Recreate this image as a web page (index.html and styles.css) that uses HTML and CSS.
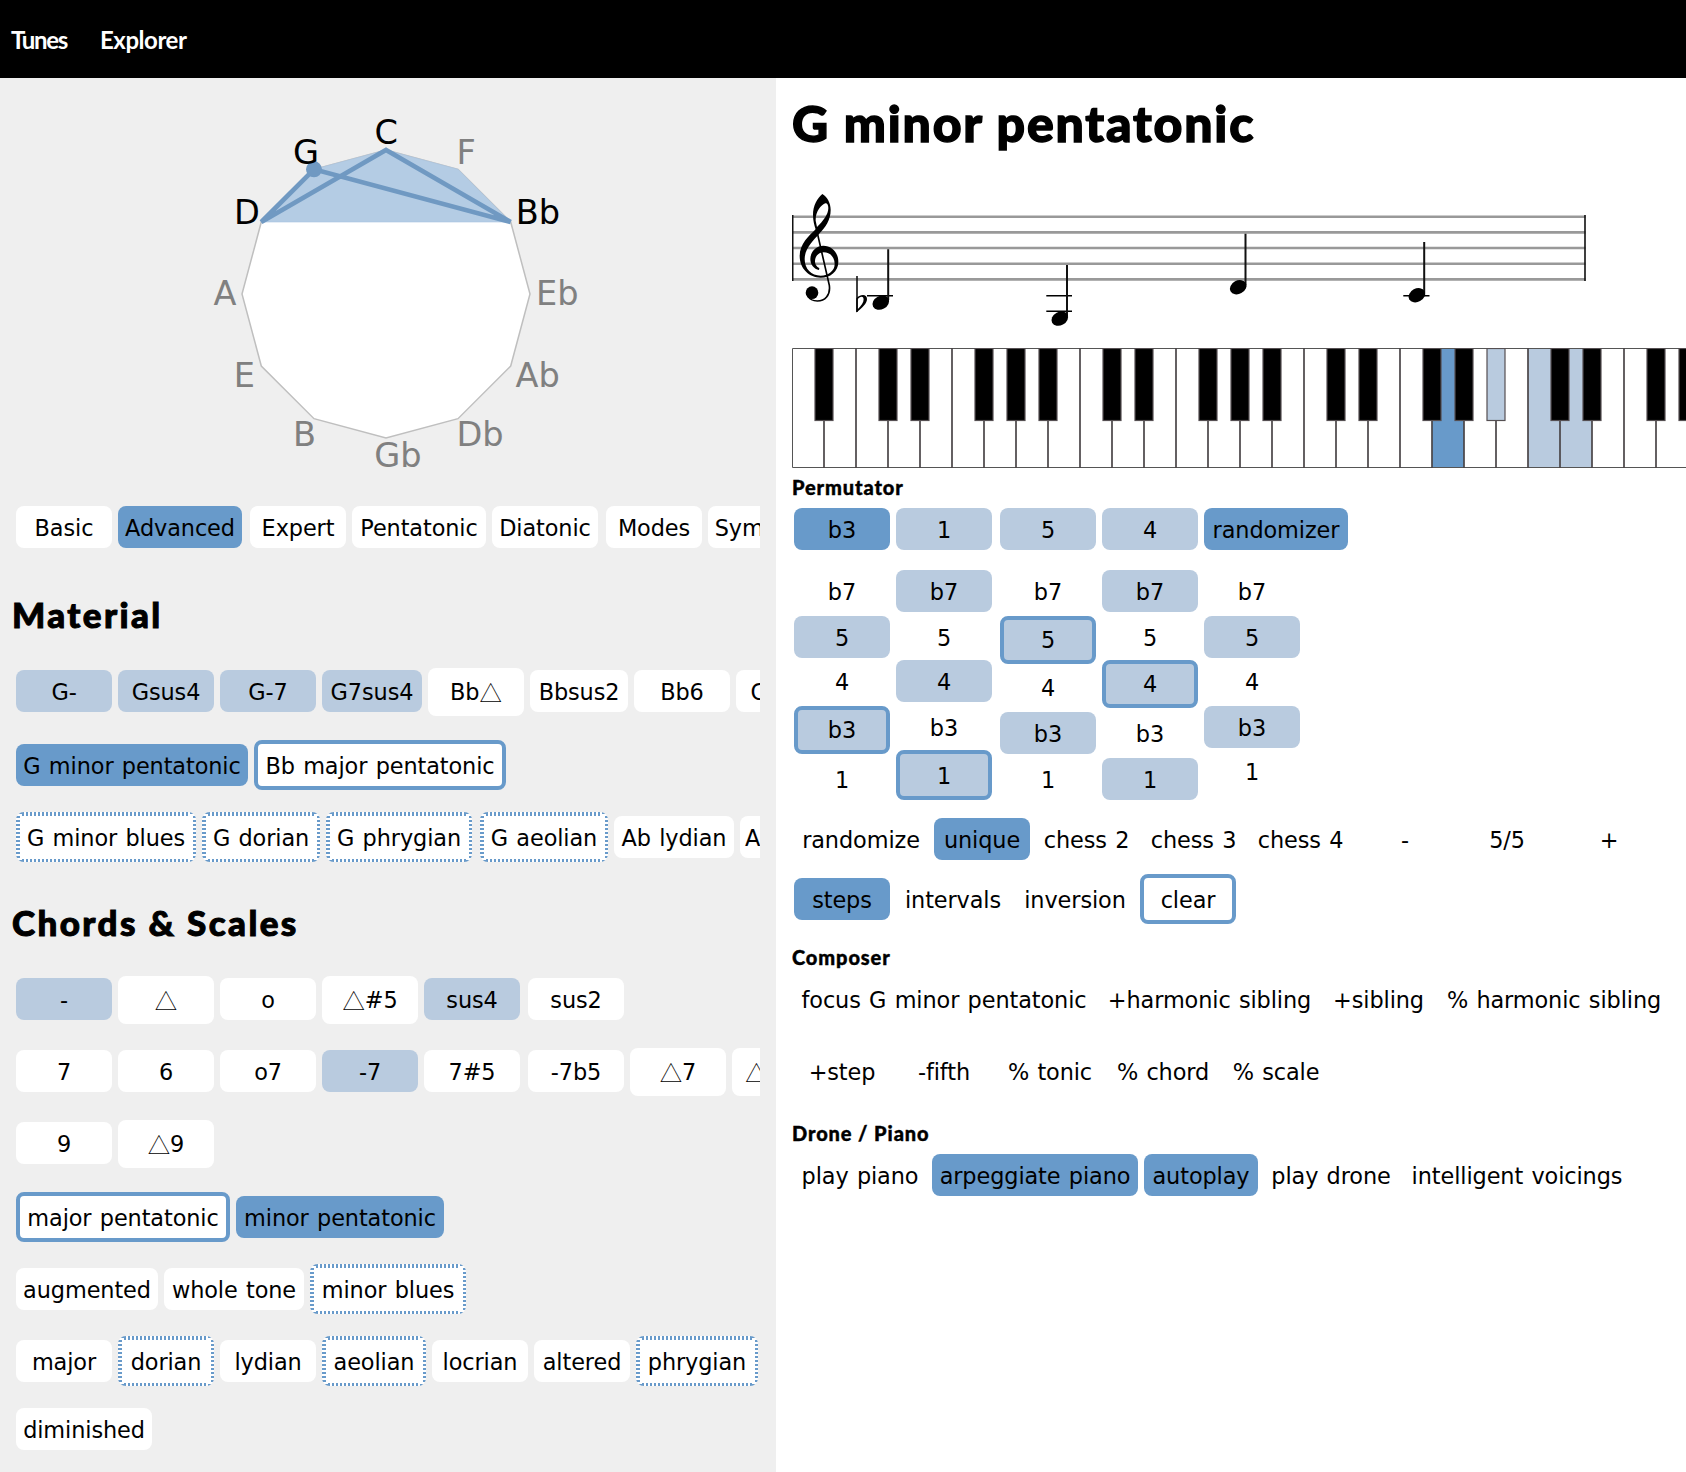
FILE: index.html
```html
<!DOCTYPE html>
<html lang="en">
<head>
<meta charset="utf-8">
<title>Explorer</title>
<link rel="stylesheet" href="styles.css">
</head>
<body>
<nav class="nav"><a class="nav-tunes">Tunes</a><a class="nav-explorer">Explorer</a></nav>
<main class="page">
<section class="left">
  <svg class="circle" viewBox="0 78 776 428">
    <polygon class="ring" points="386,150 458,169.3 510.7,222 530,294 510.7,366 458,418.7 386,438 314,418.7 261.3,366 242,294 261.3,222 314,169.3"/>
    <polygon class="area" points="261.3,222 314,169.3 386,150 458,169.3 510.7,222"/>
    <path class="edges" d="M510.7 222L386 150L261.3 222L314 169.3L510.7 222"/>
    <circle class="root" cx="314" cy="169.3" r="8"/>
    <g class="labels on">
      <text x="374.5" y="143.5">C</text><text x="293" y="163.5">G</text><text x="234" y="224">D</text><text x="515.7" y="224">Bb</text>
    </g>
    <g class="labels">
      <text x="456.5" y="163.5">F</text><text x="536" y="305">Eb</text><text x="515.5" y="386.5">Ab</text><text x="456.5" y="445.5">Db</text><text x="374.3" y="466.7">Gb</text><text x="293" y="445.5">B</text><text x="233.7" y="386.5">E</text><text x="213.5" y="305">A</text>
    </g>
  </svg>
  <div class="row first"><b>Basic</b><b class="solid w124">Advanced</b><b class="push">Expert</b><b class="w134">Pentatonic</b><b class="w106">Diatonic</b><b class="push">Modes</b><b class="w134">Symmetric</b></div>
  <h2 class="h-material"><span>Material</span></h2>
  <div class="row flush"><b class="soft">G-</b><b class="soft">Gsus4</b><b class="soft">G-7</b><b class="soft w100">G7sus4</b><b class="tri">Bb<i>△</i></b><b class="w98">Bbsus2</b><b>Bb6</b><b>Csus4</b></div>
  <div class="row loose"><b class="solid w232">G minor pentatonic</b><b class="line w252">Bb major pentatonic</b></div>
  <div class="row"><b class="dots w180">G minor blues</b><b class="dots w118">G dorian</b><b class="dots w146">G phrygian</b><b class="dots push w128">G aeolian</b><b class="w120">Ab lydian</b><b class="w156">Ab lydian #9</b></div>
  <h2 class="h-chords"><span>Chords &amp; Scales</span></h2>
  <div class="row flush"><b class="soft">-</b><b class="tri"><i>△</i></b><b>o</b><b class="tri"><i>△</i>#5</b><b class="soft">sus4</b><b class="push">sus2</b></div>
  <div class="row"><b>7</b><b>6</b><b>o7</b><b class="soft">-7</b><b>7#5</b><b class="push">-7b5</b><b class="tri"><i>△</i>7</b><b class="tri"><i>△</i>7#5</b></div>
  <div class="row"><b>9</b><b class="tri"><i>△</i>9</b></div>
  <div class="row loose"><b class="line w214">major pentatonic</b><b class="solid w208">minor pentatonic</b></div>
  <div class="row"><b class="w142">augmented</b><b class="w140">whole tone</b><b class="dots w156">minor blues</b></div>
  <div class="row"><b>major</b><b class="dots">dorian</b><b>lydian</b><b class="dots w104">aeolian</b><b>locrian</b><b>altered</b><b class="dots w122">phrygian</b></div>
  <div class="row tight"><b class="w136">diminished</b></div>
</section>
<section class="right">
  <h1><span>G minor pentatonic</span></h1>
  <svg class="staff" viewBox="792 180 894 160">
    <path class="lines" d="M792 216.8H1585.5M792 232.4H1585.5M792 248H1585.5M792 263.7H1585.5M792 279.4H1585.5"/>
    <path class="bars" d="M792.7 215V281M1585 215V281"/>
    <g transform="translate(780 80) scale(.33333)">
      <path fill-rule="evenodd" d="M127 342C112 354 99 378 99 404C99 422 103 436 107 448C88 466 59 492 59 528C59 566 88 593 122 593C150 593 175 576 175 545C175 517 154 497 130 497C108 497 91 516 91 537C91 554 102 567 117 570L118 564C108 560 105 550 105 543C105 529 116 517 131 517C149 517 164 530 164 552C164 572 146 587 122 587C94 587 74 567 74 537C74 507 98 484 119 460C136 441 152 421 152 390C152 370 142 350 127 342ZM136 370C124 374 106 394 107 422L111 441C129 423 145 404 145 384C145 374 141 369 136 370Z"/>
      <path class="clef-stem" d="M109 446L148 616C152 646 134 663 112 663C98 663 88 656 84 648"/>
      <circle cx="96" cy="638" r="19"/>
    </g>
    <path class="flat-stem" d="M857 276V312"/>
    <path d="M856.300 312.500V298.500C859 294.500 867 293 867 299C867 303.500 862.500 307.500 856.300 312.500ZM857.700 309.300C861.500 305.500 863.600 302.500 863.600 299.500C863.600 295.500 859.500 296.500 857.700 299.500Z" fill-rule="evenodd"/>
    <path class="ledger" d="M867 295.800H893M1046.300 295.800H1072M1046.300 311.300H1072M1403.300 295.800H1429.500"/>
    <path class="stems" d="M888.200 249.300V300M1067 265V316M1245.500 233.700V285M1424.200 242V293"/>
    <g class="heads">
      <ellipse rx="8.700" ry="6.700" transform="translate(880.800 302.600) rotate(-28)"/>
      <ellipse rx="8.700" ry="6.700" transform="translate(1059.800 318.600) rotate(-28)"/>
      <ellipse rx="8.700" ry="6.700" transform="translate(1238.200 287.200) rotate(-28)"/>
      <ellipse rx="8.700" ry="6.700" transform="translate(1416.900 295.200) rotate(-28)"/>
    </g>
  </svg>
  <svg class="piano" viewBox="792 348 894 120">
    <rect class="k-on" x="1432" y="348" width="32" height="119"/>
    <rect class="k-soft" x="1528" y="348" width="64" height="119"/>
    <path class="keys" d="M1690 348.500H792.500V467.500H1690"/>
    <path class="seps" d="M824 348V468M856 348V468M888 348V468M920 348V468M952 348V468M984 348V468M1016 348V468M1048 348V468M1080 348V468M1112 348V468M1144 348V468M1176 348V468M1208 348V468M1240 348V468M1272 348V468M1304 348V468M1336 348V468M1368 348V468M1400 348V468M1432 348V468M1464 348V468M1496 348V468M1528 348V468M1560 348V468M1592 348V468M1624 348V468M1656 348V468"/>
    <g class="black">
      <rect x="815" y="348.500" width="18" height="72"/><rect x="879" y="348.500" width="18" height="72"/><rect x="911" y="348.500" width="18" height="72"/><rect x="975" y="348.500" width="18" height="72"/><rect x="1007" y="348.500" width="18" height="72"/><rect x="1039" y="348.500" width="18" height="72"/><rect x="1103" y="348.500" width="18" height="72"/><rect x="1135" y="348.500" width="18" height="72"/><rect x="1199" y="348.500" width="18" height="72"/><rect x="1231" y="348.500" width="18" height="72"/><rect x="1263" y="348.500" width="18" height="72"/><rect x="1327" y="348.500" width="18" height="72"/><rect x="1359" y="348.500" width="18" height="72"/><rect x="1423" y="348.500" width="18" height="72"/><rect x="1455" y="348.500" width="18" height="72"/><rect class="k-soft" x="1487" y="348.500" width="18" height="72"/><rect x="1551" y="348.500" width="18" height="72"/><rect x="1583" y="348.500" width="18" height="72"/><rect x="1647" y="348.500" width="18" height="72"/><rect x="1679" y="348.500" width="18" height="72"/>
    </g>
  </svg>
  <h3 class="h-perm"><span>Permutator</span></h3>
  <div class="row flush"><b class="solid">b3</b><b class="soft">1</b><b class="soft push">5</b><b class="soft">4</b><b class="solid w144">randomizer</b></div>
  <div class="matrix">
    <div class="col"><b>b7</b><b class="soft">5</b><b>4</b><b class="soft line">b3</b><b class="drop">1</b></div>
    <div class="col"><b class="soft">b7</b><b>5</b><b class="soft">4</b><b>b3</b><b class="soft line tall">1</b></div>
    <div class="col push"><b>b7</b><b class="soft line">5</b><b>4</b><b class="soft">b3</b><b class="drop">1</b></div>
    <div class="col"><b class="soft">b7</b><b>5</b><b class="soft line">4</b><b>b3</b><b class="soft drop">1</b></div>
    <div class="col"><b>b7</b><b class="soft">5</b><b>4</b><b class="soft">b3</b><b>1</b></div>
  </div>
  <div class="row modes"><b class="w134">randomize</b><b class="solid">unique</b><b class="w101">chess 2</b><b class="w101">chess 3</b><b class="w101">chess 4</b><b>-</b><b>5/5</b><b>+</b></div>
  <div class="row views"><b class="solid">steps</b><b class="w114">intervals</b><b class="w118">inversion</b><b class="line">clear</b></div>
  <h3 class="h-comp"><span>Composer</span></h3>
  <div class="row flush"><b class="w300">focus G minor pentatonic</b><b class="w219">+harmonic sibling</b><b class="w107">+sibling</b><b class="w232">% harmonic sibling</b></div>
  <div class="row"><b>+step</b><b>-fifth</b><b class="w104">% tonic</b><b class="w110">% chord</b><b class="w104">% scale</b></div>
  <h3 class="h-drone"><span>Drone / Piano</span></h3>
  <div class="row flush"><b class="w132">play piano</b><b class="solid w206">arpeggiate piano</b><b class="solid w114">autoplay</b><b class="w134">play drone</b><b class="w226">intelligent voicings</b></div>
</section>
</main>
</body>
</html>
```
FILE: styles.css
```css
* { box-sizing: border-box; }
body { margin: 0; background: #fff; color: #000; font-family: Verdana, "DejaVu Sans", sans-serif; overflow: hidden; }
svg { display: block; }

.nav { height: 78px; background: #000; color: #fff; display: flex; gap: 33px; padding: 25px 0 0 11px; font: 700 24px/29px Lato, sans-serif; }
.nav-tunes { width: 56px; letter-spacing: -1.3px; }
.nav-explorer { letter-spacing: -0.45px; }

.page { display: flex; height: 1394px; }
.left { width: 776px; flex: none; background: #efefef; padding-right: 16px; }
.right { width: 910px; flex: none; padding-left: 16px; overflow: hidden; }

.circle { width: 776px; height: 428px; }
.ring { fill: #fff; stroke: #bfbfbf; stroke-width: 1.5; }
.area { fill: #b4cce4; stroke: #a9c5e1; stroke-width: 0.6; }
.edges { fill: none; stroke: #7099c2; stroke-width: 4.6; }
.root { fill: #7099c2; }
.labels { font-size: 33.6px; fill: #808080; }
.labels.on { fill: #000; }

.row { display: flex; gap: 6px; height: 42px; margin-top: 30px; padding-left: 16px; align-items: flex-start; overflow-x: clip; }
.right .row { padding-left: 2px; }
.row.first, .row.flush { margin-top: 0; }
.row.loose { margin-top: 32px; }
.row.tight { margin-top: 26px; }
.row.modes { margin-top: 18px; }
.row.views { margin-top: 18px; }

b { flex: none; width: 96px; height: 42px; padding-top: 9px; border-radius: 8px; font-weight: 400; font-size: 22.4px; line-height: 26px; letter-spacing: -0.1px; word-spacing: 1.3px; white-space: pre; display: flex; justify-content: center; }
.left b { background-color: #fff; }
b.solid, .left b.solid { background-color: #689aca; }
b.soft, .left b.soft { background-color: #b9cbdf; }
.push { margin-left: 2px; }
b.line { border: 4px solid #689aca; height: 50px; margin-top: -4px; }
b.dots {
  height: 50px; margin-top: -4px; padding-top: 13px;
  background-image:
    linear-gradient(#fff, #fff),
    repeating-linear-gradient(90deg, #689aca 0 2px, #fff 2px 4px),
    repeating-linear-gradient(0deg, #689aca 0 2px, #fff 2px 4px);
  background-size: calc(100% - 7px) calc(100% - 7px), calc(100% - 12px) 100%, 100% 100%;
  background-position: center;
  background-repeat: no-repeat;
}
b.tri { height: 48px; margin-top: -2px; padding-top: 11px; }
i { font-style: normal; font-family: "Noto Sans CJK JP", sans-serif; font-weight: 300; letter-spacing: 0; }

h1, h2, h3 { margin: 0; font-family: Futura, Lato, sans-serif; font-weight: 900; white-space: nowrap; -webkit-text-stroke: 0.4px #000; }
h1 { height: 102px; padding-top: 15px; font-size: 50px; line-height: 60px; letter-spacing: 1.8px; -webkit-text-stroke-width: 1.4px; }
h2 { font-size: 35px; line-height: 42px; letter-spacing: 2.4px; -webkit-text-stroke-width: 1px; }
.h-material { height: 122px; padding: 45px 0 0 12px; }
.h-chords { height: 120px; padding: 43px 0 0 12px; }
h3 { font-size: 20px; line-height: 24px; letter-spacing: 0.9px; }
.h-perm { height: 40px; padding-top: 7px; }
.h-comp { height: 58px; padding-top: 25px; }
.h-drone { height: 62px; padding-top: 29px; }

.staff { width: 894px; height: 160px; }
.lines { stroke: #999; stroke-width: 2.600; }
.bars { stroke: #111; stroke-width: 1.600; }
.clef-stem { fill: none; stroke: #000; stroke-width: 5; }
.flat-stem { fill: none; stroke: #111; stroke-width: 1.600; }
.ledger { stroke: #000; stroke-width: 1.500; }
.stems { stroke: #111; stroke-width: 2; }

.piano { width: 894px; height: 120px; margin-top: 8px; }
.keys { fill: none; stroke: #555; stroke-width: 1; }
.seps { stroke: #4a4648; stroke-width: 1.700; }
.black rect { fill: #000; stroke: #554f52; stroke-width: 1.200; }
.k-on { fill: #689aca; }
.k-soft, .black rect.k-soft { fill: #b9cbdf; }

.matrix { display: flex; gap: 6px; height: 230px; margin: 20px 0 0 2px; }
.col b:nth-child(odd) { margin-bottom: 4px; }
.col b:nth-child(even) { margin-bottom: 2px; }
.col b.line { height: 48px; margin-top: 0; padding-top: 7px; }
.col b.line.tall { height: 50px; padding-top: 9px; }
.col b.drop { margin-top: 4px; }

.w98 { width: 98px; } .w100 { width: 100px; } .w101 { width: 101px; } .w104 { width: 104px; }
.w106 { width: 106px; } .w107 { width: 107px; } .w110 { width: 110px; } .w114 { width: 114px; }
.w118 { width: 118px; } .w120 { width: 120px; } .w122 { width: 122px; } .w124 { width: 124px; }
.w128 { width: 128px; } .w132 { width: 132px; } .w134 { width: 134px; } .w136 { width: 136px; }
.w140 { width: 140px; } .w142 { width: 142px; } .w144 { width: 144px; } .w146 { width: 146px; }
.w156 { width: 156px; } .w180 { width: 180px; } .w206 { width: 206px; } .w208 { width: 208px; }
.w214 { width: 214px; } .w219 { width: 219px; } .w226 { width: 226px; } .w232 { width: 232px; }
.w252 { width: 252px; } .w300 { width: 300px; }
```
